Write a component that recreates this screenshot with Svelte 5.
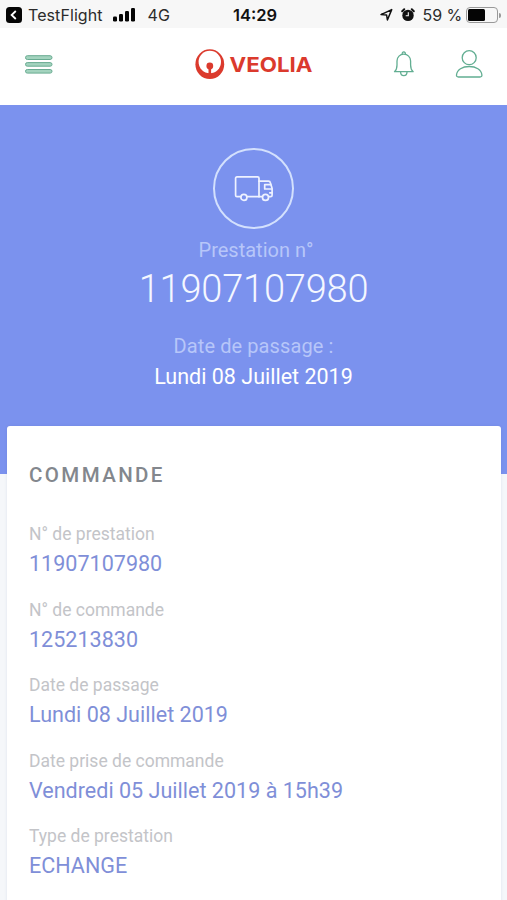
<script>
    const rows = [
        { label: "N° de prestation", value: "11907107980" },
        { label: "N° de commande", value: "125213830" },
        { label: "Date de passage", value: "Lundi 08 Juillet 2019" },
        { label: "Date prise de commande", value: "Vendredi 05 Juillet 2019 à 15h39" },
        { label: "Type de prestation", value: "ECHANGE" }
    ]
    let battery = 59;
</script>

<div class="screen">
    <div class="status">
        <div class="status-left">
            <svg class="back" width="16" height="16" viewBox="0 0 16 16">
                <rect width="16" height="16" rx="3.5" fill="#050505" />
                <path d="M9.8 4 L5.6 8 L9.8 12" fill="none" stroke="#fff" stroke-width="1.8" />
            </svg>
            <span class="app-name">TestFlight</span>
            <svg class="signal" width="23" height="14" viewBox="0 0 23 14">
                <rect x="0" y="8.5" width="4" height="5" rx="1.2" />
                <rect x="6" y="6" width="4" height="7.5" rx="1.2" />
                <rect x="12" y="3" width="4" height="10.5" rx="1.2" />
                <rect x="18" y="0" width="4" height="13.5" rx="1.2" />
            </svg>
            <span class="network">4G</span>
        </div>
        <div class="clock">14:29</div>
        <div class="status-right">
            <svg width="14" height="14" viewBox="0 0 14 14">
                <path d="M2 6.6 L12.7 1.6 L8.4 12 L7.6 7 Z" fill="none" stroke="#111" stroke-width="1.5" stroke-linejoin="round" />
            </svg>
            <svg class="alarm" width="14" height="14" viewBox="0 0 14 14">
                <circle cx="7" cy="7.4" r="5.7" fill="#111" />
                <path d="M1.2 3.2 L3.2 1.3 M10.8 1.3 L12.8 3.2" stroke="#111" stroke-width="2" stroke-linecap="round" />
                <path d="M7.3 4.3 V7.8 H4.7" fill="none" stroke="#f7f7f7" stroke-width="1.1" />
            </svg>
            <span class="percent">{battery} %</span>
            <div class="battery"><div class="level" style="width:{battery}%"></div></div>
            <div class="battery-tip"></div>
        </div>
    </div>

    <header>
        <svg class="menu" width="28" height="19" viewBox="0 0 28 19">
            <g fill="#a3d3be" stroke="#68ab91" stroke-width="1">
                <rect x="0.5" y="0.7" width="26.5" height="3.8" rx="1.9" />
                <rect x="0.5" y="7.6" width="26.5" height="3.6" rx="1.8" />
                <rect x="0.5" y="14.5" width="26.5" height="3.6" rx="1.8" />
            </g>
        </svg>
        <svg class="logo" width="120" height="32" viewBox="0 0 120 32">
            <ellipse cx="14.8" cy="16.2" rx="14.4" ry="14.9" fill="#db3a2d" />
            <circle cx="14.8" cy="14" r="11.2" fill="#fff" />
            <circle cx="14.8" cy="18" r="3.4" fill="#db3a2d" />
            <path d="M13.5 18 H16.1 V27 H13.5 Z" fill="#db3a2d" />
            <text x="34.5" y="23.9" textLength="83" lengthAdjust="spacingAndGlyphs">VEOLIA</text>
        </svg>
        <div class="actions">
            <svg width="22" height="26" viewBox="0 0 22 26" fill="none" stroke="#62ae92" stroke-width="1.3">
                <path d="M1.5 20.7 C3.8 18.8 4 17.5 4 14 V10 C4 6 7 3.2 10.8 3.2 C14.6 3.2 17.6 6 17.6 10 V14 C17.6 17.5 17.8 18.8 20.2 20.7 Z" stroke-linejoin="round" />
                <path d="M9.3 3.1 a1.6 1.6 0 1 1 3 0 M7.6 21 a3.2 3.6 0 0 0 6.4 0" />
            </svg>
            <svg width="28" height="30" viewBox="0 0 28 30" fill="none" stroke="#62ae92" stroke-width="1.3">
                <circle cx="14.2" cy="8.7" r="7" />
                <path d="M3.4 28 C1.9 28 1.4 27.2 1.5 26 C2 20.5 7.4 17.5 14.2 17.5 C21 17.5 26.4 20.5 26.9 26 C27 27.2 26.5 28 25 28 Z" />
            </svg>
        </div>
    </header>

    <section class="hero">
        <div class="round">
            <svg width="40" height="28" viewBox="0 0 40 28" fill="none" stroke="#eef2ff" stroke-width="1.7" stroke-linejoin="round" stroke-linecap="round">
                <path d="M6.8 21.7 H3 Q1.6 21.7 1.6 20.3 V3.3 Q1.6 1.9 3 1.9 H23.6 Q25 1.9 25 3.3 V21.7 H13" />
                <path d="M25 6.2 H34.5 Q36 6.2 36.4 7.8 L38.1 13.5 V20.2 Q38.1 21.7 36.6 21.7 H34.8 M28.3 21.7 H25" />
                <path d="M36.6 9.7 H30.7 V14 H37.7 M35.8 17.8 H38" />
                <circle cx="9.9" cy="22.4" r="3" />
                <circle cx="31.5" cy="22.4" r="3" />
            </svg>
        </div>
        <div class="hero-label number-label">Prestation n°</div>
        <h1>11907107980</h1>
        <div class="hero-label date-label">Date de passage :</div>
        <div class="hero-date">Lundi 08 Juillet 2019</div>
    </section>

    <main>
        <h2>COMMANDE</h2>
        {#each rows as row}
            <div class="row">
                <div class="label">{row.label}</div>
                <div class="value">{row.value}</div>
            </div>
        {/each}
    </main>
</div>

<style>
    :global(body) {
        background-color: #f5f7fa;
    }
    .screen {
        height: 900px;
        overflow: hidden;
        font-family: Roboto, "Liberation Sans", sans-serif;
    }
    svg {
        display: block;
        flex: none;
    }
    .status {
        display: grid;
        grid-template-columns: 1fr auto 1fr;
        align-items: center;
        box-sizing: border-box;
        height: 28px;
        padding: 2px 6px 0 7px;
        background-color: #f7f7f7;
        color: #2b2b2b;
        font-family: Inter, "Liberation Sans", sans-serif;
        font-size: 16px;
        line-height: 20px;
        white-space: nowrap;
    }
    .status-left, .status-right {
        display: flex;
        align-items: center;
    }
    .status-left {
        margin-left: -1px;
    }
    .status-right {
        justify-content: flex-end;
    }
    .app-name {
        margin-left: 6px;
        letter-spacing: 0.08px;
    }
    .signal {
        margin-left: 10px;
        fill: #050505;
    }
    .network {
        margin-left: 12px;
    }
    .clock {
        margin-left: 2px;
        color: #111;
        font-size: 16.5px;
        font-weight: 600;
    }
    .alarm {
        margin-left: 8px;
    }
    .percent {
        margin: 0 4px 0 8px;
        letter-spacing: -0.1px;
    }
    .battery {
        box-sizing: border-box;
        width: 32px;
        height: 16px;
        padding: 1px;
        border: 1.5px solid #999;
        border-radius: 4px;
    }
    .level {
        height: 100%;
        border-radius: 1.5px;
        background-color: #050505;
    }
    .battery-tip {
        width: 2px;
        height: 5px;
        margin-left: 1px;
        border-radius: 0 2px 2px 0;
        background-color: #999;
    }
    header {
        display: grid;
        grid-template-columns: 1fr auto 1fr;
        align-items: center;
        box-sizing: border-box;
        height: 76.5px;
        padding: 0 24px 4px 25px;
        background-color: #fff;
    }
    .logo {
        margin-left: 1px;
    }
    .logo text {
        fill: #db3a2d;
        font-family: Inter, "Liberation Sans", sans-serif;
        font-size: 20px;
        font-weight: 700;
    }
    .actions {
        display: flex;
        align-items: center;
        justify-content: flex-end;
        gap: 40px;
    }
    .hero {
        display: flex;
        flex-direction: column;
        align-items: center;
        box-sizing: border-box;
        height: 369.5px;
        padding-top: 43.5px;
        background-color: #7b92ee;
        color: #fff;
    }
    .round {
        display: flex;
        align-items: center;
        justify-content: center;
        box-sizing: border-box;
        width: 81px;
        height: 81px;
        border: 2px solid #d3e0fd;
        border-radius: 50%;
    }
    .hero-label {
        color: #b7c6f9;
        font-size: 20px;
        line-height: 24px;
    }
    .number-label {
        margin: 9px 0 0 5px;
    }
    h1 {
        margin: 3px 0 0;
        color: #f4f7ff;
        font-size: 38px;
        font-weight: 300;
        line-height: 48px;
        letter-spacing: -0.2px;
    }
    .date-label {
        margin-top: 21px;
        letter-spacing: 0.1px;
    }
    .hero-date {
        margin-top: 6px;
        font-size: 21.5px;
        line-height: 26px;
    }
    main {
        position: relative;
        box-sizing: border-box;
        height: 500px;
        margin: -48px 6px 0 7px;
        padding: 35px 22px 0;
        border-radius: 3px;
        background-color: #fff;
        box-shadow: 0 0 3px rgba(60, 80, 140, 0.12);
    }
    h2 {
        margin: 0 0 33px;
        color: #83878d;
        font-size: 20.5px;
        font-weight: 500;
        line-height: 28px;
        letter-spacing: 2.4px;
    }
    .row {
        height: 75.5px;
    }
    .label {
        color: #c3c4c8;
        font-size: 17.5px;
        line-height: 24px;
    }
    .value {
        margin-top: 4px;
        color: #7f8fd8;
        font-size: 21.55px;
        line-height: 28px;
    }
</style>
